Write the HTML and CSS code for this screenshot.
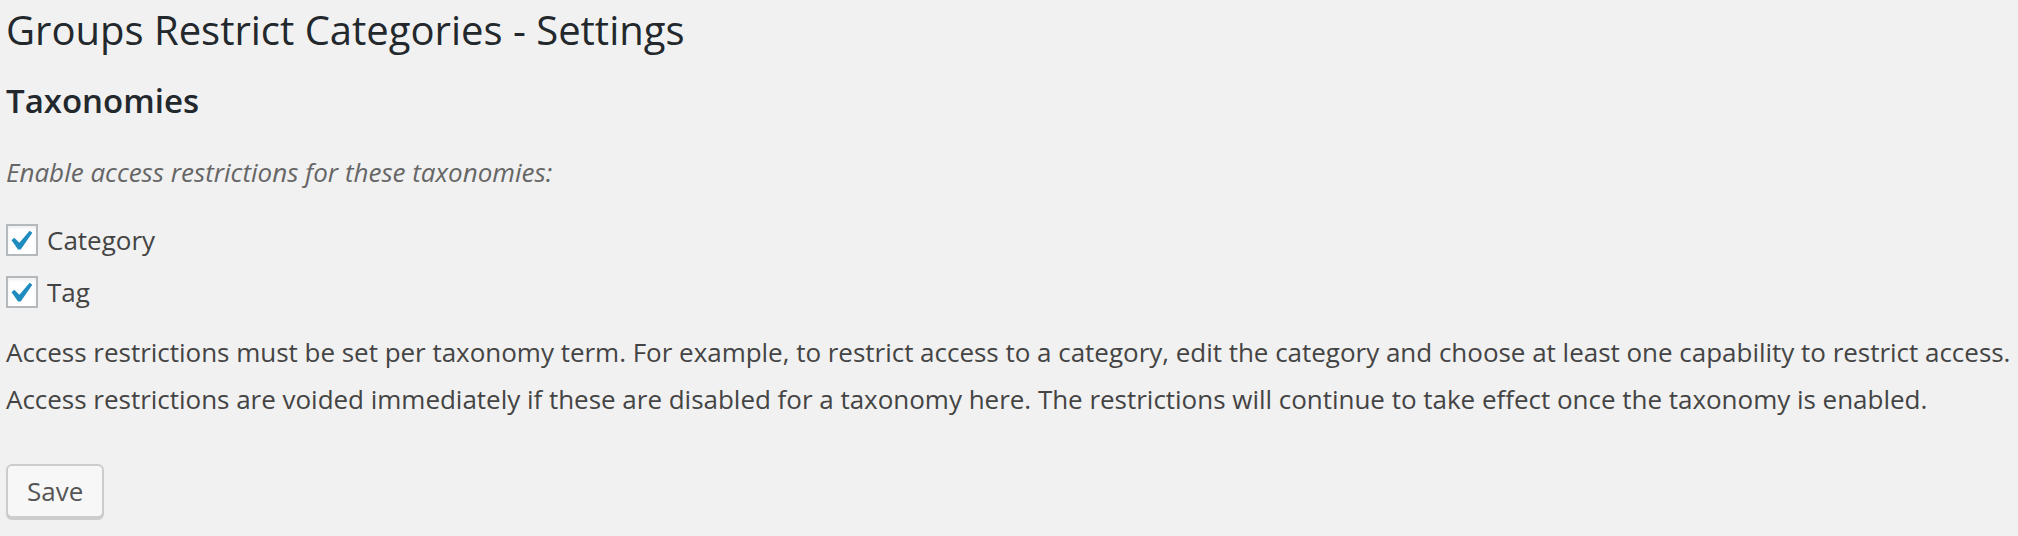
FILE: index.html
```html
<!DOCTYPE html>
<html lang="en">
<head>
    <meta charset="UTF-8">
    <title>Groups Restrict Categories - Settings</title>
    <link rel="stylesheet" href="styles.css">
</head>
<body>
    <div class="wrap">
        <h1>Groups Restrict Categories - Settings</h1>
        <h2>Taxonomies</h2>
        <p class="description">Enable access restrictions for these taxonomies:</p>

        <div class="taxonomies">
            <label class="option">
                <span class="box">
                    <svg width="22" height="20" viewBox="5.5 4.5 11 10"><path d="M14.83 4.89l1.34.94-5.81 8.38H9.02L5.78 9.67l1.34-1.25 2.57 2.4z"/></svg>
                </span>
                Category
            </label>
            <label class="option">
                <span class="box">
                    <svg width="22" height="20" viewBox="5.5 4.5 11 10"><path d="M14.83 4.89l1.34.94-5.81 8.38H9.02L5.78 9.67l1.34-1.25 2.57 2.4z"/></svg>
                </span>
                Tag
            </label>
        </div>

        <div class="notes">
            <p>Access restrictions must be set per taxonomy term. For example, to restrict access to a category, edit the category and choose at least one capability to restrict access.</p>
            <p>Access restrictions are voided immediately if these are disabled for a taxonomy here. The restrictions will continue to take effect once the taxonomy is enabled.</p>
        </div>

        <button class="button">Save</button>
    </div>
</body>
</html>
```

FILE: styles.css
```css
* {
    margin: 0;
    padding: 0;
    box-sizing: border-box;
}

html, body {
    height: 100%;
    overflow: hidden;
}

body {
    font-family: "Open Sans", "Liberation Sans", sans-serif;
    font-size: 26px;
    color: #444;
    background: #f1f1f1;
}

.wrap {
    padding: 5px 0 0 6px;
}

h1 {
    font-size: 40px;
    font-weight: 400;
    line-height: 50px;
    color: #23282d;
}

h2 {
    margin-top: 26px;
    font-size: 33px;
    font-weight: 600;
    line-height: 40px;
    color: #23282d;
}

.description {
    margin-top: 31px;
    font-style: italic;
    line-height: 40px;
    color: #666;
}

.taxonomies {
    margin-top: 22px;
}

.option {
    display: flex;
    align-items: center;
    gap: 9px;
    height: 52px;
    line-height: 40px;
    cursor: pointer;
}

.box {
    display: flex;
    align-items: center;
    justify-content: center;
    width: 32px;
    height: 32px;
    border: 2px solid #b4b9be;
    background: #fff;
    box-shadow: inset 0 2px 3px rgba(0, 0, 0, 0.07);
}

.box svg {
    fill: #1e8cbe;
}

.notes {
    margin-top: 11px;
    line-height: 47px;
    white-space: nowrap;
    letter-spacing: -0.02px;
}

.button {
    display: block;
    margin-top: 41px;
    height: 54px;
    padding: 0 19px;
    font-family: inherit;
    font-size: 26px;
    line-height: 50px;
    color: #555;
    background: #f7f7f7;
    border: 2px solid #ccc;
    border-radius: 6px;
    box-shadow: 0 2px 0 #ccc;
    cursor: pointer;
}
```
